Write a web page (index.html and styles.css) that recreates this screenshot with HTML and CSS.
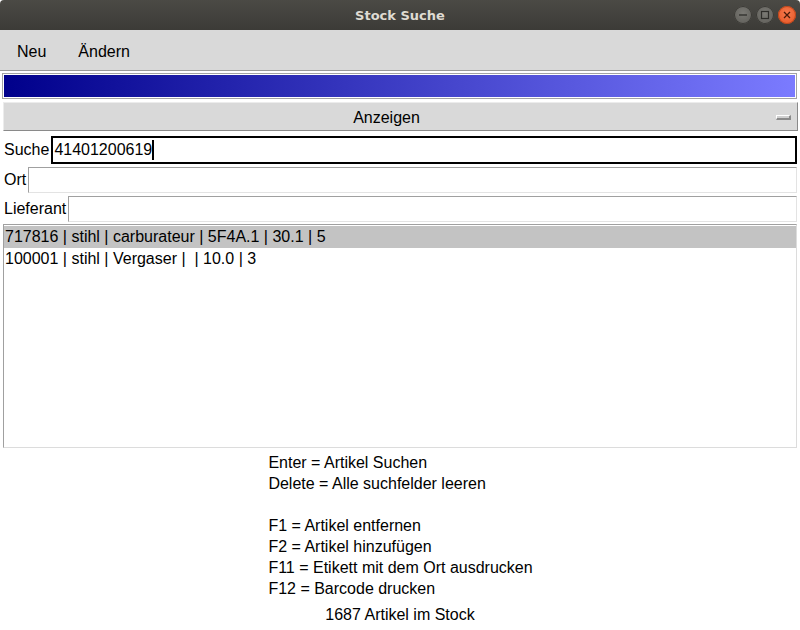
FILE: index.html
```html
<!DOCTYPE html>
<html lang="de">
<head>
<meta charset="utf-8">
<title>Stock Suche</title>
<link rel="stylesheet" href="styles.css">
</head>
<body>
<div class="window">
  <header class="titlebar">
    <span></span>
    <span class="title">Stock Suche</span>
    <div class="winbtns">
      <span class="wb wb-min"><svg width="18" height="18" viewBox="0 0 18 18"><line x1="5" y1="9" x2="13" y2="9" stroke="#2e2d2a" stroke-width="1.3"/></svg></span>
      <span class="wb wb-max"><svg width="18" height="18" viewBox="0 0 18 18"><rect x="5.5" y="5.5" width="7" height="7" fill="none" stroke="#2e2d2a" stroke-width="1.2"/></svg></span>
      <span class="wb wb-close"><svg width="18" height="18" viewBox="0 0 18 18"><path d="M6 6 L12 12 M12 6 L6 12" stroke="#4a1a08" stroke-width="1.3"/></svg></span>
    </div>
  </header>
  <nav class="menubar">
    <span class="menuitem">Neu</span>
    <span class="menuitem">Ändern</span>
  </nav>
  <div class="progress"><div class="progress-fill"></div></div>
  <div class="toggle">
    <span class="toggle-label">Anzeigen</span>
    <span class="indicator"></span>
  </div>
  <div class="fields">
    <label class="row"><span class="lbl">Suche</span><span class="entry focus">41401200619<span class="caret"></span></span></label>
    <label class="row"><span class="lbl">Ort</span><span class="entry"></span></label>
    <label class="row"><span class="lbl">Lieferant</span><span class="entry"></span></label>
  </div>
  <div class="listbox">
    <div class="item sel">717816 | stihl | carburateur | 5F4A.1 | 30.1 | 5</div>
    <div class="item">100001 | stihl | Vergaser |&nbsp; | 10.0 | 3</div>
  </div>
  <div class="help">
    <div class="help-block">
      <div>Enter = Artikel Suchen</div>
      <div>Delete = Alle suchfelder leeren</div>
      <div>&nbsp;</div>
      <div>F1 = Artikel entfernen</div>
      <div>F2 = Artikel hinzufügen</div>
      <div>F11 = Etikett mit dem Ort ausdrucken</div>
      <div>F12 = Barcode drucken</div>
    </div>
  </div>
  <div class="status">1687 Artikel im Stock</div>
</div>
</body>
</html>
```
FILE: styles.css
```css
html, body {
  margin: 0;
  padding: 0;
  background: #ffffff;
}
body {
  font-family: "Liberation Sans", Arial, sans-serif;
  font-size: 16px;
  color: #000;
}
.window {
  width: 800px;
  height: 630px;
  display: flex;
  flex-direction: column;
  overflow: hidden;
}
.titlebar {
  height: 30px;
  flex: none;
  display: grid;
  grid-template-columns: 1fr auto 1fr;
  align-items: center;
  background: linear-gradient(#4b4a45, #3c3b37);
  border-radius: 4px 4px 0 0;
}
.title {
  font-family: "DejaVu Sans", sans-serif;
  font-weight: bold;
  font-size: 13px;
  color: #dfdbd2;
  padding-top: 1px;
}
.winbtns {
  justify-self: end;
  display: flex;
  gap: 4px;
  padding-right: 4px;
}
.wb {
  width: 18px;
  height: 18px;
  border-radius: 50%;
  display: block;
}
.wb svg { display: block; }
.wb-min, .wb-max {
  background: radial-gradient(circle at 50% 40%, #7a7974, #5b5a55);
  box-shadow: inset 0 0 0 1px #3a3935;
}
.wb-close {
  background: radial-gradient(circle at 50% 40%, #f57a4e, #e5511f);
  box-shadow: inset 0 0 0 1px #b8461c;
}
.menubar {
  flex: none;
  display: flex;
  align-items: center;
  background: #d9d9d9;
  border-bottom: 1px solid #9a9a9a;
  padding-left: 1px;
  padding-top: 3px;
  box-sizing: border-box;
  height: 41px;
}
.menuitem {
  padding: 0 16px;
}
.progress {
  margin: 2px 3px 0 2px;
  height: 26px;
  box-sizing: border-box;
  border: 1px solid #a3a3a3;
  padding: 1px;
  background: #ffffff;
  flex: none;
}
.progress-fill {
  height: 100%;
  background: linear-gradient(to right, #00008b, #7b7bff);
}
.toggle {
  margin: 3px 2px 0 3px;
  height: 29px;
  box-sizing: border-box;
  background: #d9d9d9;
  border-top: 1px solid #ececec;
  border-left: 1px solid #ececec;
  border-right: 1px solid #8a8a8a;
  border-bottom: 1px solid #8a8a8a;
  display: flex;
  align-items: center;
  justify-content: center;
  padding-right: 28px;
  padding-top: 3px;
  position: relative;
  flex: none;
}
.indicator {
  position: absolute;
  right: 6px;
  top: 12px;
  width: 15px;
  height: 5px;
  box-sizing: border-box;
  background: #d0d0d0;
  border-top: 1px solid #ffffff;
  border-left: 1px solid #ffffff;
  border-right: 2px solid #8a8a8a;
  border-bottom: 2px solid #8a8a8a;
}
.fields {
  display: flex;
  flex-direction: column;
  margin-top: 5px;
  gap: 2px;
  padding: 0 3px 0 4px;
  flex: none;
}
.row {
  display: flex;
  align-items: center;
  gap: 1px;
}
.row + .row { margin-top: 1px; }
.lbl {
  flex: none;
  padding-right: 1px;
}
.entry {
  flex: 1;
  height: 26px;
  box-sizing: border-box;
  border-top: 1px solid #a0a0a0;
  border-left: 1px solid #a0a0a0;
  border-right: 1px solid #e3e3e3;
  border-bottom: 1px solid #e3e3e3;
  background: #ffffff;
  display: flex;
  align-items: center;
  padding-left: 2px;
}
.entry.focus {
  height: 28px;
  border: 2px solid #000;
  padding-left: 1px;
}
.caret {
  display: inline-block;
  width: 2px;
  height: 20px;
  background: #000;
}
.listbox {
  margin: 2px 3px 0 3px;
  height: 224px;
  box-sizing: border-box;
  border-top: 1px solid #a0a0a0;
  border-left: 1px solid #a0a0a0;
  border-right: 1px solid #dcdcdc;
  border-bottom: 1px solid #dcdcdc;
  padding: 1px 0 0 0;
  flex: none;
}
.item {
  height: 22px;
  line-height: 22px;
  padding-left: 1px;
  white-space: pre;
}
.item.sel {
  background: #c3c3c3;
}
.help {
  display: flex;
  justify-content: center;
  margin-top: 4px;
  flex: none;
}
.help-block {
  line-height: 21px;
  padding-left: 1px;
}
.status {
  text-align: center;
  line-height: 21px;
  margin-top: 5px;
}
```
